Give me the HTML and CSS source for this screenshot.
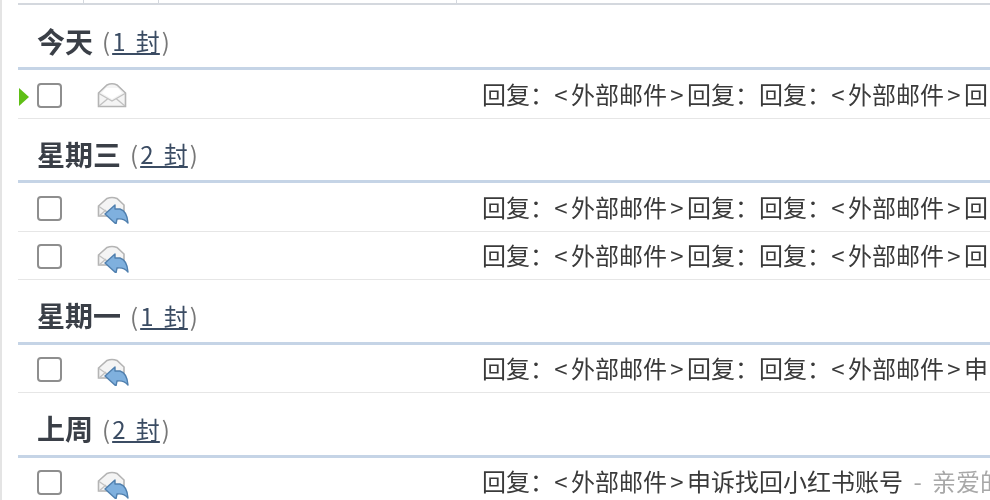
FILE: index.html
```html
<!DOCTYPE html>
<html lang="zh-CN">
<head>
    <meta charset="UTF-8">
    <title>收件箱</title>
    <link rel="stylesheet" href="styles.css">
</head>
<body>
    <svg class="defs" width="0" height="0">
        <symbol id="mail-open" viewBox="0 0 30 26">
            <path d="M1.5 11 L10 3 Q15 0.5 20 3 L28.5 11 V24.5 H1.5 Z" fill="#f4f4f4" stroke="#b4b4b4" stroke-width="1.6"/>
            <path d="M5 11 L9 6 H21 L25 11 L15 17 Z" fill="#fff"/>
            <path d="M2 11.5 L15 19 L28 11.5 M2 24 L11 16.5 M28 24 L19 16.5" fill="none" stroke="#c2c2c2" stroke-width="1.4"/>
        </symbol>
        <symbol id="mail-reply" viewBox="0 0 32 28">
            <path d="M1.5 10 L10 2.5 Q15 0.5 20 2.5 L27 9 V20 H1.5 Z" fill="#f4f4f4" stroke="#b4b4b4" stroke-width="1.6"/>
            <path d="M2 10.5 L10 16 M2 20 L9 14" fill="none" stroke="#c2c2c2" stroke-width="1.4"/>
            <path d="M8 18 L18 9 V13 H23 Q30 15 31 27 Q27 22 20 23 L19 28 Z" fill="#7fb0de" stroke="#4f7fae" stroke-width="1.4" stroke-linejoin="round"/>
        </symbol>
    </svg>

    <div class="mail-list">
        <div class="list-head">
            <span class="col-a"></span>
            <span class="col-b"></span>
            <span class="col-c"></span>
        </div>

        <div class="group first">
            <h3 class="group-title">今天 <span class="count">(<u>1 封</u>)</span></h3>
            <div class="mail-row">
                <i class="current"></i>
                <span class="check"></span>
                <svg class="mail-icon open"><use href="#mail-open"/></svg>
                <div class="subject">回复：<b>&lt;</b>外部邮件<b>&gt;</b>回复：回复：<b>&lt;</b>外部邮件<b>&gt;</b>回</div>
            </div>
        </div>

        <div class="group">
            <h3 class="group-title">星期三 <span class="count">(<u>2 封</u>)</span></h3>
            <div class="mail-row">
                <span class="check"></span>
                <svg class="mail-icon"><use href="#mail-reply"/></svg>
                <div class="subject">回复：<b>&lt;</b>外部邮件<b>&gt;</b>回复：回复：<b>&lt;</b>外部邮件<b>&gt;</b>回</div>
            </div>
            <div class="mail-row">
                <span class="check"></span>
                <svg class="mail-icon"><use href="#mail-reply"/></svg>
                <div class="subject">回复：<b>&lt;</b>外部邮件<b>&gt;</b>回复：回复：<b>&lt;</b>外部邮件<b>&gt;</b>回</div>
            </div>
        </div>

        <div class="group">
            <h3 class="group-title">星期一 <span class="count">(<u>1 封</u>)</span></h3>
            <div class="mail-row">
                <span class="check"></span>
                <svg class="mail-icon"><use href="#mail-reply"/></svg>
                <div class="subject">回复：<b>&lt;</b>外部邮件<b>&gt;</b>回复：回复：<b>&lt;</b>外部邮件<b>&gt;</b>申</div>
            </div>
        </div>

        <div class="group">
            <h3 class="group-title">上周 <span class="count">(<u>2 封</u>)</span></h3>
            <div class="mail-row">
                <span class="check"></span>
                <svg class="mail-icon"><use href="#mail-reply"/></svg>
                <div class="subject">回复：<b>&lt;</b>外部邮件<b>&gt;</b>申诉找回小红书账号<span class="preview"> - 亲爱的</span></div>
            </div>
        </div>
    </div>
</body>
</html>
```

FILE: styles.css
```css
html, body {
    margin: 0;
    height: 500px;
    overflow: hidden;
    background-color: white;
}
body {
    font-family: "Noto Sans CJK SC", "Liberation Sans", sans-serif;
    color: #333;
    border-left: 2px solid #e4e4e4;
    box-sizing: border-box;
}
.defs {
    display: block;
    height: 0;
}
.mail-list {
    margin-left: 16px;
    filter: blur(0.5px);
}
.list-head {
    display: flex;
    height: 3px;
    border-bottom: 2px solid #d4d8de;
}
.list-head span {
    border-right: 1px solid #d4d8de;
}
.col-a { width: 65px; }
.col-b { width: 74px; }
.col-c { width: 297px; }
.group-title {
    margin: 0;
    height: 64.5px;
    padding-left: 19px;
    padding-top: 9px;
    box-sizing: border-box;
    display: flex;
    align-items: center;
    gap: 9px;
    border-bottom: 3px solid #c5d4e6;
    font-size: 28px;
    font-weight: bold;
    color: #3a3f47;
    white-space: nowrap;
}
.group.first .group-title {
    height: 65px;
}
.count {
    font-size: 24px;
    font-weight: normal;
    color: #777;
}
.count u {
    color: #3b4c63;
    margin: 0 2px;
    word-spacing: 5px;
}
.mail-row {
    position: relative;
    display: flex;
    align-items: center;
    height: 48.5px;
    box-sizing: border-box;
    padding-left: 19px;
    border-bottom: 1px solid #e6e6e6;
}
.current {
    position: absolute;
    left: 1px;
    top: 18px;
    border-left: 10px solid #5fbf16;
    border-top: 9px solid transparent;
    border-bottom: 9px solid transparent;
}
.check {
    flex: none;
    width: 25px;
    height: 25px;
    margin-top: 3px;
    box-sizing: border-box;
    border: 2px solid #8e8e8e;
    border-radius: 4px;
    background-color: white;
}
.mail-icon {
    flex: none;
    width: 32px;
    height: 28px;
    margin-top: 7px;
    margin-left: 35px;
    margin-right: 353px;
}
.mail-icon.open {
    width: 30px;
    height: 26px;
    margin-top: 3px;
    margin-right: 355px;
}
.subject {
    flex: 1;
    min-width: 0;
    white-space: nowrap;
    font-size: 24px;
    line-height: 32px;
    color: #3a3a3a;
}
.subject b {
    font-weight: normal;
    display: inline-block;
    width: 20px;
    text-align: center;
}
.subject b:nth-of-type(odd) {
    margin-left: -3px;
}
.preview {
    color: #a8a8a8;
    word-spacing: 5px;
}
```
